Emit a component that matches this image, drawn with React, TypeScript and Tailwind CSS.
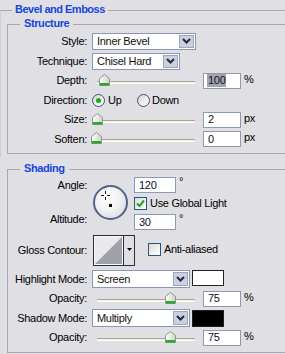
import React from "react";

function Chevron() {
  return (
    <svg width="9" height="6" viewBox="0 0 9 6">
      <path d="M1 1 L4.5 4.5 L8 1" fill="none" stroke="#1d2a48" strokeWidth="2" />
    </svg>
  );
}

function Select({ value, w, h }: { value: string; w: string; h: string }) {
  return (
    <div className={`${w} ${h} flex border border-[#8797b5] bg-white p-[1px] shrink-0`}>
      <div className="flex-1 pl-[3px] flex items-center text-[#111]">{value}</div>
      <div className="w-[15px] h-full bg-[#cdd0dc] border border-[#9aa6c2] flex items-center justify-center">
        <Chevron />
      </div>
    </div>
  );
}

function Thumb() {
  return (
    <svg width="11" height="12" viewBox="0 0 11 12">
      <defs>
        <linearGradient id="tg" x1="0" y1="0" x2="1" y2="0">
          <stop offset="0" stopColor="#ffffff" />
          <stop offset="1" stopColor="#cfd2c6" />
        </linearGradient>
      </defs>
      <path d="M0.5 4.5 L5.5 0.5 L10.5 4.5 V11.5 H0.5 Z" fill="url(#tg)" stroke="#8a998a" />
      <rect x="1" y="9" width="9" height="2.5" fill="#2ea52e" />
    </svg>
  );
}

function Slider({ left }: { left: string }) {
  return (
    <div className="relative w-[104px] h-full shrink-0">
      <div className="absolute left-[5px] top-[10px] w-[98px] h-[3px] bg-[#f3f1e4] border-t border-[#a5a59c] border-b border-b-white" />
      <div className={`absolute top-[3px] ${left}`}>
        <Thumb />
      </div>
    </div>
  );
}

function Input({ value, w, sel }: { value: string; w: string; sel?: boolean }) {
  return (
    <div className={`${w} h-[16px] border border-[#8b9bb5] bg-white pl-[4px] flex items-center shrink-0 text-[#101030]`}>
      {sel ? <span className="bg-[#a3a4ab] px-[1px] -ml-[1px]">{value}</span> : value}
    </div>
  );
}

function Radio({ checked }: { checked?: boolean }) {
  return (
    <div className="w-[13px] h-[13px] rounded-full border border-[#3c5283] bg-[linear-gradient(135deg,#d6d6ce,#ffffff)] flex items-center justify-center shrink-0">
      {checked && <div className="w-[5px] h-[5px] rounded-full bg-[#25a625]" />}
    </div>
  );
}

function Checkbox({ checked }: { checked?: boolean }) {
  return (
    <div className="w-[13px] h-[13px] border border-[#2a5388] bg-[linear-gradient(135deg,#dcdcd4,#ffffff)] flex items-center justify-center shrink-0">
      {checked && (
        <svg width="9" height="9" viewBox="0 0 9 9">
          <path d="M1 4.5 L3.5 7 L8 1.5" fill="none" stroke="#22a222" strokeWidth="2" />
        </svg>
      )}
    </div>
  );
}

function Label({ children }: { children: React.ReactNode }) {
  return <div className="w-[79px] text-right shrink-0 whitespace-nowrap">{children}</div>;
}

export default function App() {
  return (
    <div className="w-[285px] h-[354px] overflow-hidden bg-[#e0dfe3] text-[11px] tracking-[-0.3px] text-black font-['Liberation_Sans',Arial,sans-serif] leading-[13px]">
      <div className="relative mt-[10px] border-t border-l border-t-[#a9a8b0] border-l-[#cfced4] pt-[13px] pl-[6px] pb-[3px]">
        <div className="absolute left-[11px] top-[-8px] px-[3px] bg-[#e0dfe3] font-bold text-[#1546e0] tracking-[-0.5px]">
          Bevel and Emboss
        </div>

        <div className="relative border-t border-l border-b border-[#a9a8b0] pt-[6px] pb-[4px]">
          <div className="absolute left-[12px] top-[-8px] px-[4px] bg-[#e0dfe3] font-bold text-[#1546e0] tracking-[-0.4px]">
            Structure
          </div>

          <div className="flex items-center h-[20px]">
            <Label>Style:</Label>
            <div className="ml-[5px]">
              <Select value="Inner Bevel" w="w-[104px]" h="h-[17px]" />
            </div>
          </div>
          <div className="flex items-center h-[20px]">
            <Label>Technique:</Label>
            <div className="ml-[5px]">
              <Select value="Chisel Hard" w="w-[88px]" h="h-[17px]" />
            </div>
          </div>
          <div className="flex items-center h-[19px]">
            <Label>Depth:</Label>
            <div className="ml-[5px] flex items-center h-full">
              <Slider left="left-[7px]" />
              <div className="ml-[7px]">
                <Input value="100" w="w-[38px]" sel />
              </div>
              <div className="ml-[3px] -mt-[3px]">%</div>
            </div>
          </div>
          <div className="flex items-center h-[20px]">
            <Label>Direction:</Label>
            <div className="ml-[5px] flex items-center">
              <div className="w-[45px] flex items-center">
                <Radio checked />
                <span className="ml-[3px]">Up</span>
              </div>
              <div className="flex items-center">
                <Radio />
                <span className="ml-[2px]">Down</span>
              </div>
            </div>
          </div>
          <div className="flex items-center h-[19px]">
            <Label>Size:</Label>
            <div className="ml-[5px] flex items-center h-full">
              <Slider left="left-[0px]" />
              <div className="ml-[7px]">
                <Input value="2" w="w-[38px]" />
              </div>
              <div className="ml-[3px] -mt-[3px]">px</div>
            </div>
          </div>
          <div className="flex items-center h-[20px]">
            <Label>Soften:</Label>
            <div className="ml-[5px] flex items-center h-full">
              <Slider left="left-[-1px]" />
              <div className="ml-[7px]">
                <Input value="0" w="w-[38px]" />
              </div>
              <div className="ml-[3px] -mt-[3px]">px</div>
            </div>
          </div>
        </div>
      </div>

      <div className="relative ml-[7px] mt-[12px] border-t border-l border-b border-[#a9a8b0] pt-[6px] pb-[5px]">
        <div className="absolute left-[12px] top-[-8px] px-[4px] bg-[#e0dfe3] font-bold text-[#1546e0] tracking-[-0.4px]">
          Shading
        </div>

        <div className="flex h-[55px]">
          <div className="w-[79px] shrink-0 flex flex-col items-end">
            <div className="h-[18px] flex items-center">Angle:</div>
            <div className="h-[16px] mt-[17px] flex items-center">Altitude:</div>
          </div>
          <div className="relative ml-[6px] mt-[9px] w-[35px] h-[35px] rounded-full border-2 border-[#53628a] bg-[radial-gradient(circle_at_40%_35%,#ffffff_0%,#f2f2f4_45%,#d2d2d8_100%)] shrink-0">
            <svg className="absolute left-[6px] top-[4px]" width="9" height="9" viewBox="0 0 9 9">
              <path d="M4.5 0 V3 M4.5 6 V9 M0 4.5 H3 M6 4.5 H9" stroke="#111" strokeWidth="1" />
            </svg>
            <div className="absolute left-[14px] top-[17px] w-[3px] h-[3px] bg-black" />
          </div>
          <div className="ml-[6px] flex flex-col">
            <div className="h-[18px] flex items-center">
              <Input value="120" w="w-[42px]" />
              <div className="ml-[3px] self-start -mt-[1px]">°</div>
            </div>
            <div className="h-[19px] flex items-center">
              <Checkbox checked />
              <span className="ml-[3px] whitespace-nowrap">Use Global Light</span>
            </div>
            <div className="h-[18px] flex items-center">
              <Input value="30" w="w-[42px]" />
              <div className="ml-[3px] self-start -mt-[1px]">°</div>
            </div>
          </div>
        </div>

        <div className="flex items-center h-[31px] mt-[4px]">
          <Label>Gloss Contour:</Label>
          <div className="ml-[6px] w-[42px] h-[31px] border border-[#2e2e32] flex bg-[#dfdfe3] shrink-0">
            <div className="w-[29px] h-full border border-[#f8f8fa]">
              <svg width="27" height="27" viewBox="0 0 27 27" className="block">
                <rect x="0" y="0" width="27" height="27" fill="#e9e9ed" />
                <polygon points="0,27 27,0 27,27" fill="#a1a1a9" />
              </svg>
            </div>
            <div className="flex-1 border-l border-[#2e2e32] flex items-center justify-center pb-[3px]">
              <svg width="5" height="3" viewBox="0 0 5 3">
                <polygon points="0,0 5,0 2.5,3" fill="#000" />
              </svg>
            </div>
          </div>
          <div className="ml-[13px] flex items-center -mt-[2px]">
            <Checkbox />
            <span className="ml-[3px] whitespace-nowrap">Anti-aliased</span>
          </div>
        </div>

        <div className="flex items-center h-[20px] mt-[3px]">
          <Label>Highlight Mode:</Label>
          <div className="ml-[5px] flex items-center">
            <Select value="Screen" w="w-[98px]" h="h-[18px]" />
            <div className="ml-[2px] w-[32px] h-[16px] border border-[#222] bg-white -mt-[2px]" />
          </div>
        </div>
        <div className="flex items-center h-[19px]">
          <Label>Opacity:</Label>
          <div className="ml-[5px] flex items-center h-full">
            <Slider left="left-[73px]" />
            <div className="ml-[7px]">
              <Input value="75" w="w-[38px]" />
            </div>
            <div className="ml-[3px] -mt-[3px]">%</div>
          </div>
        </div>
        <div className="flex items-center h-[20px]">
          <Label>Shadow Mode:</Label>
          <div className="ml-[5px] flex items-center">
            <Select value="Multiply" w="w-[98px]" h="h-[18px]" />
            <div className="ml-[2px] w-[32px] h-[17px] border border-[#222] bg-black" />
          </div>
        </div>
        <div className="flex items-center h-[19px]">
          <Label>Opacity:</Label>
          <div className="ml-[5px] flex items-center h-full">
            <Slider left="left-[73px]" />
            <div className="ml-[7px]">
              <Input value="75" w="w-[38px]" />
            </div>
            <div className="ml-[3px] -mt-[3px]">%</div>
          </div>
        </div>
      </div>
    </div>
  );
}
